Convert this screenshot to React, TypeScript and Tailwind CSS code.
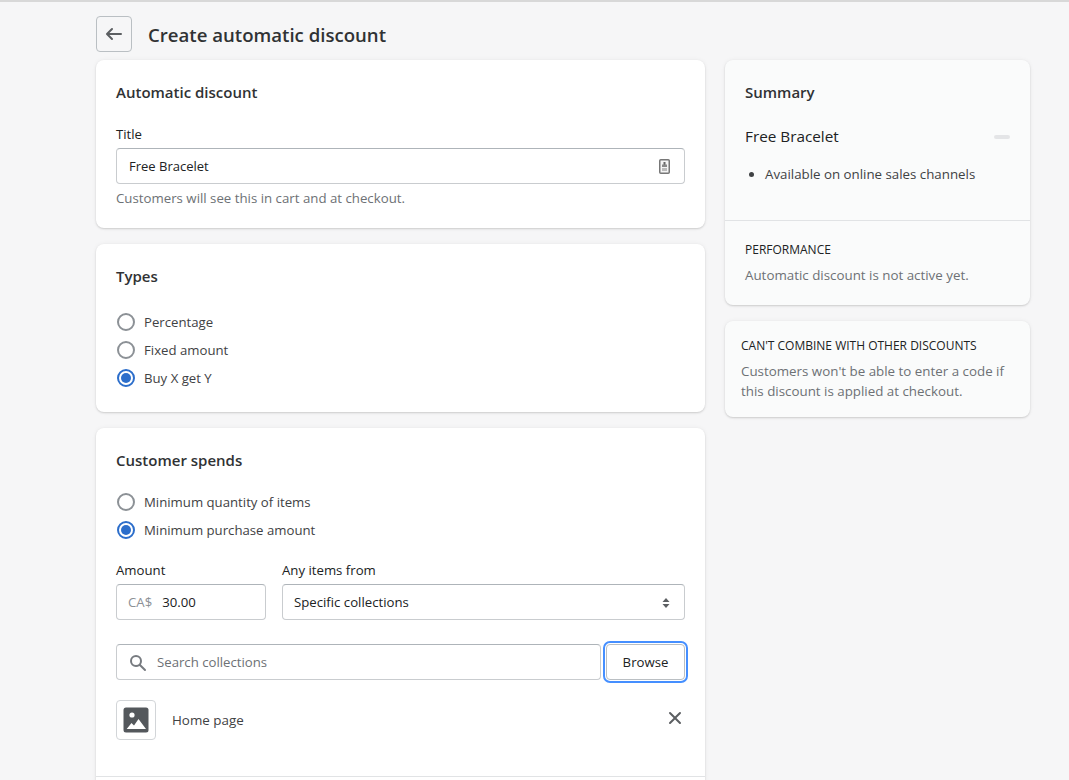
import React from "react";

const font = { fontFamily: '"Open Sans", "Noto Sans", sans-serif' };

function Card({ children, className = "" }: { children: React.ReactNode; className?: string }) {
  return (
    <section className={`rounded-[8px] shadow-[0_0_5px_rgba(23,24,24,0.05),0_1px_2px_rgba(0,0,0,0.15)] ${className}`}>
      {children}
    </section>
  );
}

function Heading({ children }: { children: React.ReactNode }) {
  return <h2 className="text-[15px] leading-6 font-semibold text-[#303234]">{children}</h2>;
}

function Radio({ label, checked = false }: { label: string; checked?: boolean }) {
  return (
    <label className="flex h-7 items-center gap-[9px] pl-px text-[13.2px] text-[#3f4244]">
      {checked ? (
        <span className="flex h-[18px] w-[18px] items-center justify-center rounded-full border-2 border-[#2c6ecb]">
          <span className="h-[10px] w-[10px] rounded-full bg-[#2c6ecb]" />
        </span>
      ) : (
        <span className="h-[18px] w-[18px] rounded-full border-2 border-[#8c9196]" />
      )}
      <span className="pt-px">{label}</span>
    </label>
  );
}

function Field({ children, className = "" }: { children: React.ReactNode; className?: string }) {
  return (
    <div className={`flex h-9 items-center rounded-[4px] border border-[#c9cccf] border-t-[#aeb4b9] bg-white px-3 pt-px text-[13.2px] ${className}`}>
      {children}
    </div>
  );
}

export default function App() {
  return (
    <div style={font} className="h-[780px] w-[1069px] overflow-hidden border-t-2 border-[#d8d8d8] bg-[#f6f6f7] pl-[96px]">
      <header className="flex h-[58px] items-center gap-4 pt-[6px]">
        <button className="flex h-9 w-9 items-center justify-center rounded-[4px] border border-[#babfc3] text-[#5c5f62]">
          <svg width="20" height="20" viewBox="0 0 20 20" fill="currentColor">
            <path d="M17 9H5.414l3.293-3.293a1 1 0 1 0-1.414-1.414l-5 5a1 1 0 0 0 0 1.414l5 5a1 1 0 0 0 1.414-1.414L5.414 11H17a1 1 0 1 0 0-2z" />
          </svg>
        </button>
        <h1 className="pt-[2px] text-[18.6px] font-semibold text-[#303234]">Create automatic discount</h1>
      </header>

      <div className="flex items-start gap-5">
        <main className="flex w-[609px] flex-col gap-4">
          <Card className="bg-white p-5">
            <Heading>Automatic discount</Heading>
            <div className="mt-5 mb-1 text-[13.2px] leading-5 text-[#202223]">Title</div>
            <Field className="justify-between text-[#202223]">
              <span className="text-[13px]">Free Bracelet</span>
              <svg width="11" height="15" viewBox="0 0 11 15" className="mr-[2px]">
                <rect x="0.75" y="0.75" width="9.5" height="13.5" rx="1" fill="#f4f4f4" stroke="#777" strokeWidth="1.5" />
                <rect x="4.5" y="3" width="2" height="3" fill="#666" />
                <rect x="3" y="5.5" width="5" height="2.5" fill="#888" />
                <rect x="3" y="9" width="5" height="3" fill="#bbb" />
              </svg>
            </Field>
            <p className="mt-1 text-[13.25px] leading-5 text-[#6d7175]">Customers will see this in cart and at checkout.</p>
          </Card>

          <Card className="bg-white p-5">
            <Heading>Types</Heading>
            <div className="mt-5">
              <Radio label="Percentage" />
              <Radio label="Fixed amount" />
              <Radio label="Buy X get Y" checked />
            </div>
          </Card>

          <Card className="h-[500px] bg-white">
            <div className="border-b border-[#e1e3e5] p-5 pb-9">
              <Heading>Customer spends</Heading>
              <div className="mt-4">
                <Radio label="Minimum quantity of items" />
                <Radio label="Minimum purchase amount" checked />
              </div>
              <div className="mt-4 flex gap-4">
                <div className="w-[150px]">
                  <div className="mb-1 text-[13.2px] leading-5 text-[#202223]">Amount</div>
                  <Field className="text-[#202223]">
                    <span className="-ml-px mr-[10px] text-[#8c9196]">CA$</span>30.00
                  </Field>
                </div>
                <div className="flex-1">
                  <div className="mb-1 text-[13.2px] leading-5 text-[#202223]">Any items from</div>
                  <Field className="justify-between text-[#202223]">
                    <span className="-ml-px">Specific collections</span>
                    <svg width="8" height="12" viewBox="0 0 8 12" fill="#5c5f62" className="mr-[2px]">
                      <path d="M4 1 7.5 5h-7zM4 11 .5 7h7z" />
                    </svg>
                  </Field>
                </div>
              </div>
              <div className="mt-6 flex gap-[5px]">
                <Field className="flex-1 text-[#6d7175]">
                  <svg width="20" height="20" viewBox="0 0 20 20" fill="#777b80" className="-ml-px mr-[9px]">
                    <path d="M8 12a4 4 0 1 1 0-8 4 4 0 0 1 0 8zm9.707 4.293-4.82-4.82A5.968 5.968 0 0 0 14 8 6 6 0 0 0 2 8a6 6 0 0 0 6 6 5.968 5.968 0 0 0 3.473-1.113l4.82 4.82a.997.997 0 0 0 1.414 0 .999.999 0 0 0 0-1.414z" />
                  </svg>
                  Search collections
                </Field>
                <button className="h-9 w-[79px] rounded-[4px] border border-[#babfc3] bg-white pt-px text-[13.2px] text-[#202223] outline-2 outline-offset-[1px] outline-[#458fff]">
                  Browse
                </button>
              </div>
              <div className="mt-5 flex items-center gap-4">
                <div className="flex h-10 w-10 items-center justify-center rounded-[4px] border border-[#d2d5d8] bg-white">
                  <svg width="26" height="26" viewBox="0 0 26 26">
                    <rect x="0.5" y="0.5" width="25" height="25" rx="2.5" fill="#54585c" />
                    <circle cx="9" cy="8" r="2.6" fill="#fff" />
                    <path d="M3.7 22 8.5 16l2.5 2.5L15.5 12 23 22z" fill="#fff" />
                  </svg>
                </div>
                <span className="pt-px text-[13.4px] text-[#3f4244]">Home page</span>
                <svg width="20" height="20" viewBox="0 0 20 20" fill="#5c5f62" className="mb-1 ml-auto">
                  <path d="m11.414 10 4.293-4.293a.999.999 0 1 0-1.414-1.414L10 8.586 5.707 4.293a.999.999 0 1 0-1.414 1.414L8.586 10l-4.293 4.293a.999.999 0 1 0 1.414 1.414L10 11.414l4.293 4.293a.997.997 0 0 0 1.414 0 .999.999 0 0 0 0-1.414L11.414 10z" />
                </svg>
              </div>
            </div>
          </Card>
        </main>

        <aside className="flex w-[305px] flex-col gap-4">
          <Card className="bg-[#fafbfb]">
            <div className="border-b border-[#e1e3e5] p-5 pb-9">
              <Heading>Summary</Heading>
              <div className="mt-5 flex h-6 items-center justify-between">
                <span className="text-[15.3px] font-medium text-[#202223]">Free Bracelet</span>
                <span className="mt-px h-1 w-4 rounded-sm bg-[#e4e5e7]" />
              </div>
              <ul className="mt-4 list-disc pl-5 text-[13.3px] leading-5 text-[#3f4244]">
                <li>Available on online sales channels</li>
              </ul>
            </div>
            <div className="p-5">
              <h3 className="pt-px -mb-px text-[12px] leading-4 text-[#202223]">PERFORMANCE</h3>
              <p className="mt-2 text-[13.35px] leading-5 text-[#6d7175]">Automatic discount is not active yet.</p>
            </div>
          </Card>
          <Card className="bg-[#fafbfb] p-4">
            <h3 className="pt-px -mb-px text-[12px] leading-4 text-[#202223]">CAN'T COMBINE WITH OTHER DISCOUNTS</h3>
            <p className="mt-2 text-[13.35px] leading-5 text-[#6d7175]">
              Customers won't be able to enter a code if this discount is applied at checkout.
            </p>
          </Card>
        </aside>
      </div>
    </div>
  );
}
